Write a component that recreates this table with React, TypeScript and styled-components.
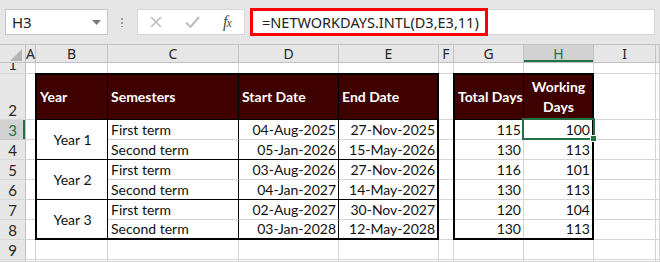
import React from "react";
import styled, { createGlobalStyle } from "styled-components";

const GREEN = "#217346";
const MAROON = "#3f0000";
const GRID = "#d4d4d4";
const HEAD_LINE = "#c2c2c2";
const CELL_FONT = `"Lato", "Liberation Sans", sans-serif`;
const UI_FONT = `"Noto Sans", "Liberation Sans", sans-serif`;

const GlobalStyle = createGlobalStyle`
  html, body {
    margin: 0;
    padding: 0;
    background: #fff;
  }
  body {
    width: 660px;
    height: 262px;
    overflow: hidden;
  }
`;

const Window = styled.div`
  width: 660px;
  height: 262px;
  overflow: hidden;
  display: flex;
  flex-direction: column;
  background: #e6e6e6;
`;

/* ---------- formula bar ---------- */

const FormulaBar = styled.div`
  height: 44px;
  flex: none;
  box-sizing: border-box;
  padding: 9px 0 0 5px;
  display: flex;
  align-items: flex-start;
`;

const NameBox = styled.div`
  width: 103px;
  height: 26px;
  box-sizing: border-box;
  background: #fff;
  border: 1px solid #c6c6c6;
  display: flex;
  align-items: center;
  justify-content: space-between;
  padding: 0 6px 0 6px;
  font: 15px ${UI_FONT};
  color: #222;
`;

const Grip = styled.div`
  width: 2px;
  height: 10px;
  margin: 8px 14px 0 13px;
  background: radial-gradient(circle, #9a9a9a 0.9px, transparent 1px) 0 0 / 2px 4px;
`;

const EditBox = styled.div`
  width: 108px;
  height: 26px;
  box-sizing: border-box;
  background: #fff;
  border: 1px solid #d6d6d6;
  display: flex;
  align-items: center;
  padding-left: 12px;
`;

const ToolIcon = styled.svg<{ $gap: number }>`
  margin-right: ${(p) => p.$gap}px;
`;

const Fx = styled.span`
  font: italic 16px "Liberation Serif", "DejaVu Serif", serif;
  color: #4a4a4a;
  letter-spacing: -1px;

  small {
    font-size: 12px;
  }
`;

const FormulaField = styled.div`
  margin-left: 5px;
  width: 405px;
  height: 26px;
  box-sizing: border-box;
  background: #fff;
  border: 1px solid #d6d6d6;
  display: flex;
`;

const Highlight = styled.div`
  width: 238px;
  height: 28px;
  margin: -2px 0 0 -1px;
  box-sizing: border-box;
  border: 3px solid #ff0000;
  display: flex;
  align-items: center;
  padding-left: 9px;
  font: 14.5px ${UI_FONT};
  color: #222;
  white-space: nowrap;
`;

/* ---------- sheet ---------- */

const Sheet = styled.div`
  flex: 1;
  display: grid;
  border-top: 1px solid ${HEAD_LINE};
  grid-template-columns: 26px 10px 72px 131px 100px 100px 15px 70px 70px 62px 1fr;
  grid-template-rows: 18px 11px 46px repeat(7, 20px) 1fr;
  background: #fff;
`;

interface Slot {
  $row: number;
  $col: number;
}

const ColHead = styled.div<{ $active?: boolean; $col: number }>`
  grid-row: 1;
  grid-column: ${(p) => p.$col};
  box-sizing: border-box;
  border-right: 1px solid ${HEAD_LINE};
  border-bottom: 1px solid ${HEAD_LINE};
  background: ${(p) => (p.$active ? "#d2d2d2" : "#e6e6e6")};
  color: ${(p) => (p.$active ? GREEN : "#262626")};
  box-shadow: ${(p) => (p.$active ? `inset 0 -2px 0 ${GREEN}` : "none")};
  font: 14px ${UI_FONT};
  display: flex;
  align-items: center;
  justify-content: center;
  line-height: 16px;
`;

const Corner = styled.div`
  grid-row: 1;
  grid-column: 1;
  box-sizing: border-box;
  border-right: 1px solid ${HEAD_LINE};
  border-bottom: 1px solid ${HEAD_LINE};
  background: #e6e6e6;
  display: flex;
  align-items: flex-end;
  justify-content: flex-end;
  padding: 0 3px 1px 0;
`;

const RowHead = styled.div<{ $active?: boolean; $row: number }>`
  grid-row: ${(p) => p.$row};
  grid-column: 1;
  box-sizing: border-box;
  border-right: 1px solid ${HEAD_LINE};
  border-bottom: 1px solid ${(p) => (p.$active ? "#c8c8c8" : "#d8d8d8")};
  background: ${(p) => (p.$active ? "#d2d2d2" : "#e6e6e6")};
  color: ${(p) => (p.$active ? GREEN : "#262626")};
  box-shadow: ${(p) => (p.$active ? `inset -2px 0 0 ${GREEN}` : "none")};
  font: 15px ${CELL_FONT};
  display: flex;
  align-items: flex-end;
  justify-content: center;
  line-height: 18px;
  overflow: hidden;
`;

const Cell = styled.div<Slot>`
  grid-row: ${(p) => p.$row};
  grid-column: ${(p) => p.$col};
  box-sizing: border-box;
  border-right: 1px solid ${GRID};
  border-bottom: 1px solid ${GRID};
`;

/* ---------- data tables ---------- */

const Table = styled.div<{ $cols: string; $span: string }>`
  grid-column: ${(p) => p.$span};
  grid-row: 3 / 10;
  margin: -1px 0 0 -1px;
  border: 2px solid #000;
  display: grid;
  grid-template-columns: ${(p) => p.$cols};
  grid-template-rows: 45px repeat(5, 20px) 18px;
  background: #fff;
  position: relative;
  font: 14px ${CELL_FONT};
  color: #111;
`;

const Head = styled.div<{ $last?: boolean; $center?: boolean }>`
  box-sizing: border-box;
  background: ${MAROON};
  color: #fff;
  font-weight: 700;
  border-bottom: 1px solid #000;
  border-right: ${(p) => (p.$last ? "none" : "1px solid #000")};
  display: flex;
  align-items: center;
  justify-content: ${(p) => (p.$center ? "center" : "flex-start")};
  text-align: ${(p) => (p.$center ? "center" : "left")};
  padding: 0 2px 0 3px;
  line-height: 20px;
  white-space: nowrap;
`;

type Align = "left" | "right" | "center";

const Data = styled.div<{ $align: Align; $right?: string; $bottom?: string; $rows?: number; $col?: number }>`
  box-sizing: border-box;
  position: relative;
  grid-row: ${(p) => (p.$rows ? `span ${p.$rows}` : "auto")};
  grid-column: ${(p) => (p.$col ? p.$col : "auto")};
  border-right: ${(p) => (p.$right ? `1px solid ${p.$right}` : "none")};
  border-bottom: ${(p) => (p.$bottom ? `1px solid ${p.$bottom}` : "none")};
  display: flex;
  align-items: ${(p) => (p.$rows ? "center" : "flex-end")};
  justify-content: ${(p) =>
    p.$align === "right" ? "flex-end" : p.$align === "center" ? "center" : "flex-start"};
  padding: 0 2px 0 3px;
  line-height: 19px;
  white-space: nowrap;
`;

const Selection = styled.div`
  position: absolute;
  top: -2px;
  left: -2px;
  right: -3px;
  bottom: -1px;
  border: 2px solid ${GREEN};
  pointer-events: none;

  &::after {
    content: "";
    position: absolute;
    right: -4px;
    bottom: -4px;
    width: 5px;
    height: 5px;
    background: ${GREEN};
    border: 1px solid #fff;
  }
`;

interface Term {
  name: string;
  start: string;
  end: string;
  total: number;
  working: number;
}

const years: { label: string; terms: Term[] }[] = [
  {
    label: "Year 1",
    terms: [
      { name: "First term", start: "04-Aug-2025", end: "27-Nov-2025", total: 115, working: 100 },
      { name: "Second term", start: "05-Jan-2026", end: "15-May-2026", total: 130, working: 113 },
    ],
  },
  {
    label: "Year 2",
    terms: [
      { name: "First term", start: "03-Aug-2026", end: "27-Nov-2026", total: 116, working: 101 },
      { name: "Second term", start: "04-Jan-2027", end: "14-May-2027", total: 130, working: 113 },
    ],
  },
  {
    label: "Year 3",
    terms: [
      { name: "First term", start: "02-Aug-2027", end: "30-Nov-2027", total: 120, working: 104 },
      { name: "Second term", start: "03-Jan-2028", end: "12-May-2028", total: 130, working: 113 },
    ],
  },
];

const COLUMNS = ["A", "B", "C", "D", "E", "F", "G", "H", "I", ""];
// the tenth row only peeks in at the bottom edge, its number is out of view
const ROWS = 10;
const NUMBERED_ROWS = 9;

const App: React.FC = () => {
  const flat = years.flatMap((y) => y.terms);

  return (
    <>
      <GlobalStyle />
      <Window>
        <FormulaBar>
          <NameBox>
            <span>H3</span>
            <svg width="9" height="5" viewBox="0 0 9 5">
              <path d="M0 0h9L4.5 5z" fill="#7a7a7a" />
            </svg>
          </NameBox>
          <Grip />
          <EditBox>
            <ToolIcon $gap={23} width="12" height="12" viewBox="0 0 12 12">
              <path d="M1 1l10 10M11 1L1 11" stroke="#bdbdbd" strokeWidth="1.6" fill="none" />
            </ToolIcon>
            <ToolIcon $gap={23} width="15" height="12" viewBox="0 0 15 12">
              <path d="M1 6.5l4.5 4.5L14 1" stroke="#bdbdbd" strokeWidth="2" fill="none" />
            </ToolIcon>
            <Fx>
              f<small>x</small>
            </Fx>
          </EditBox>
          <FormulaField>
            <Highlight>=NETWORKDAYS.INTL(D3,E3,11)</Highlight>
          </FormulaField>
        </FormulaBar>

        <Sheet>
          <Corner>
            <svg width="12" height="12" viewBox="0 0 12 12">
              <path d="M12 0v12H0z" fill="#b4b4b4" />
            </svg>
          </Corner>
          {COLUMNS.map((c, i) => (
            <ColHead key={`h${i}`} $col={i + 2} $active={c === "H"}>
              {c}
            </ColHead>
          ))}
          {Array.from({ length: ROWS }, (_, r) => (
            <React.Fragment key={`r${r}`}>
              <RowHead $row={r + 2} $active={r === 2}>
                {r < NUMBERED_ROWS ? r + 1 : null}
              </RowHead>
              {COLUMNS.map((_, c) => (
                <Cell key={`c${r}-${c}`} $row={r + 2} $col={c + 2} />
              ))}
            </React.Fragment>
          ))}

          <Table $span="3 / 7" $cols="71px 131px 100px 98px">
            <Head>Year</Head>
            <Head>Semesters</Head>
            <Head>Start Date</Head>
            <Head $last>End Date</Head>
            {years.map((y, yi) => {
              const lastGroup = yi === years.length - 1;
              return (
                <React.Fragment key={y.label}>
                  <Data
                    $align="center"
                    $rows={2}
                    $col={1}
                    $right="#000"
                    $bottom={lastGroup ? undefined : "#000"}
                  >
                    {y.label}
                  </Data>
                  {y.terms.map((t, ti) => {
                    const bottom = ti === 0 ? GRID : lastGroup ? undefined : "#000";
                    return (
                      <React.Fragment key={t.name}>
                        <Data $align="left" $col={2} $right="#000" $bottom={bottom}>
                          {t.name}
                        </Data>
                        <Data $align="right" $right="#000" $bottom={bottom}>
                          {t.start}
                        </Data>
                        <Data $align="right" $bottom={bottom}>
                          {t.end}
                        </Data>
                      </React.Fragment>
                    );
                  })}
                </React.Fragment>
              );
            })}
          </Table>

          <Table $span="8 / 10" $cols="69px 68px">
            <Head>Total Days</Head>
            <Head $last $center>
              Working
              <br />
              Days
            </Head>
            {flat.map((t, i) => {
              const bottom = i === flat.length - 1 ? undefined : GRID;
              return (
                <React.Fragment key={`t${i}`}>
                  <Data $align="right" $right={GRID} $bottom={bottom}>
                    {t.total}
                  </Data>
                  <Data $align="right" $bottom={bottom}>
                    {t.working}
                    {i === 0 && <Selection />}
                  </Data>
                </React.Fragment>
              );
            })}
          </Table>
        </Sheet>
      </Window>
    </>
  );
};

export default App;
